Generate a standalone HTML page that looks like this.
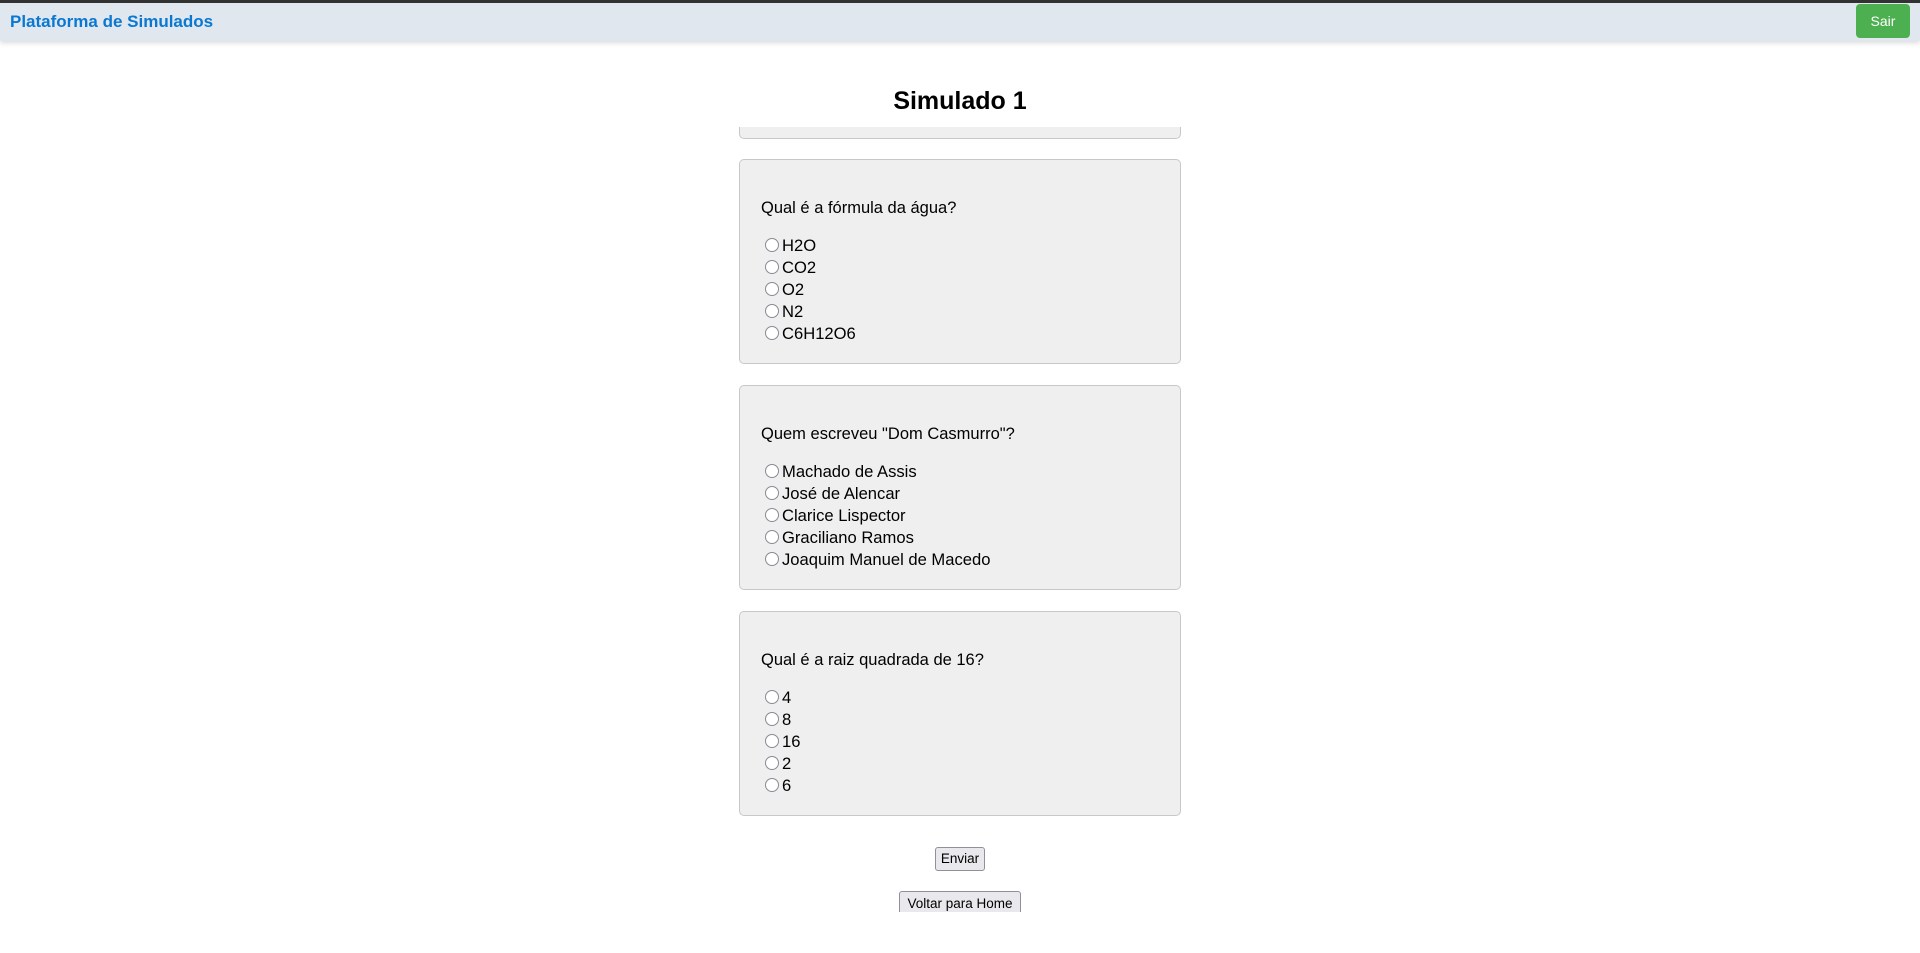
<!DOCTYPE html>
<html><head><meta charset="utf-8"><style>
*{box-sizing:border-box;margin:0;padding:0}
body{width:1920px;height:953px;overflow:hidden;background:#fff;font-family:"Liberation Sans",sans-serif;position:relative;color:#000}
.top{position:absolute;left:0;top:0;width:1920px;height:3px;background:#333}
.hdr{position:absolute;left:0;top:3px;width:1920px;height:38px;background:#e0e7ef;box-shadow:0 2px 5px rgba(0,0,0,.15)}
.brand{position:absolute;left:10px;top:9px;font-weight:bold;font-size:17px;color:#0a78d1}
.sair{position:absolute;left:1856px;top:4px;width:54px;height:34px;background:#4caf50;border-radius:4px;color:#fff;font-size:14px;text-align:center;line-height:34px}
h2{position:absolute;left:0;width:1920px;top:87px;text-align:center;font-size:25px;font-weight:bold}
.card{position:absolute;left:739px;width:442px;height:205px;background:#efefef;border:1px solid #c8c8c8;border-radius:5px}
.q{position:absolute;left:21px;top:39px;font-size:16.5px}
.o{position:absolute;left:21px;font-size:16.6px;line-height:22px;height:22px}
.o i{display:inline-block;width:14px;height:14px;border:1.5px solid #8a8a95;border-radius:50%;background:#fff;margin:0 3px 0 4px;vertical-align:-1px}
.btn{position:absolute;background:#e9e9ed;border:1px solid #8f8f9d;border-radius:3px;font-size:13.5px;text-align:center}
</style></head><body>
<div class="top"></div>
<div class="hdr"><div class="brand">Plataforma de Simulados</div></div>
<div class="sair">Sair</div>
<h2>Simulado 1</h2>
<div style="position:absolute;left:739px;top:127px;width:442px;height:12px;background:#efefef;border:1px solid #c8c8c8;border-top:none;border-radius:0 0 5px 5px"></div>

<div class="card" style="top:159px">
<div class="q">Qual é a fórmula da água?</div>
<div class="o" style="top:75px"><i></i>H2O</div>
<div class="o" style="top:97px"><i></i>CO2</div>
<div class="o" style="top:119px"><i></i>O2</div>
<div class="o" style="top:141px"><i></i>N2</div>
<div class="o" style="top:163px"><i></i>C6H12O6</div>
</div>
<div class="card" style="top:385px">
<div class="q">Quem escreveu "Dom Casmurro"?</div>
<div class="o" style="top:75px"><i></i>Machado de Assis</div>
<div class="o" style="top:97px"><i></i>José de Alencar</div>
<div class="o" style="top:119px"><i></i>Clarice Lispector</div>
<div class="o" style="top:141px"><i></i>Graciliano Ramos</div>
<div class="o" style="top:163px"><i></i>Joaquim Manuel de Macedo</div>
</div>
<div class="card" style="top:611px">
<div class="q">Qual é a raiz quadrada de 16?</div>
<div class="o" style="top:75px"><i></i>4</div>
<div class="o" style="top:97px"><i></i>8</div>
<div class="o" style="top:119px"><i></i>16</div>
<div class="o" style="top:141px"><i></i>2</div>
<div class="o" style="top:163px"><i></i>6</div>
</div>
<div class="btn" style="left:935px;top:847px;width:50px;height:24px;line-height:22px">Enviar</div>
<div style="position:absolute;left:899px;top:891px;width:122px;height:21px;overflow:hidden">
<div class="btn" style="left:0;top:0;width:122px;height:26px;line-height:24px">Voltar para Home</div></div>
</body></html>
